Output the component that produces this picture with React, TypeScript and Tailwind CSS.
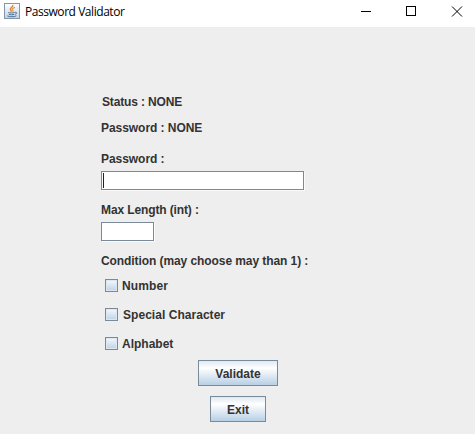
import React from 'react';

function JavaIcon() {
  return (
    <svg width="16" height="16" viewBox="0 0 16 16" fill="none" aria-hidden="true">
      <defs>
        <linearGradient id="tile" x1="0" y1="0" x2="0" y2="1">
          <stop offset="0" stopColor="#ffffff" />
          <stop offset="1" stopColor="#c3d3e1" />
        </linearGradient>
      </defs>
      <rect x="0.5" y="0.5" width="15" height="15" fill="url(#tile)" stroke="#8296ab" />
      <path d="M8.8 2C9.4 4 5.2 5 6.6 7.2L7.6 8.6" stroke="#dc8a3c" strokeWidth="1.5" />
      <path d="M11 4.3C8.6 5 7.8 6 8.8 7.1C9.3 7.8 9 8.3 8.5 8.8" stroke="#e0994f" strokeWidth="1.3" />
      <path d="M4.2 9.5C6 10.2 9 10.1 10.6 9.5M4.8 11.3C6.5 12 8.8 11.9 10.2 11.3M3.3 12.9C5.5 14.1 10.2 14 12.4 12.8M10.9 9.3C13.4 8.8 13.2 11 10.9 11.4" stroke="#4b7192" strokeWidth="1" />
    </svg>
  );
}

const label = 'block h-4 leading-4 whitespace-nowrap';

function Field({ className, caret }: { className: string; caret?: boolean }) {
  return (
    <div className={`flex h-[19px] border border-[#7a8a99] bg-white shadow-[1px_1px_0_#fafafa] ${className}`}>
      {caret && <span className="mt-px ml-px h-[15px] w-px bg-[#222]" />}
    </div>
  );
}

function Check({ text, className }: { text: string; className: string }) {
  return (
    <label className="flex h-[13px] items-center">
      <span className="h-[13px] w-[13px] border border-[#7a8a99] bg-linear-to-b from-[#f5f9fc] to-[#bdd2e5] shadow-[inset_0_0_0_1px_#dce7f1]" />
      <span className={`${label} ${className}`}>{text}</span>
    </label>
  );
}

function Button({ text, className }: { text: string; className: string }) {
  return (
    <button
      className={`h-[26px] border border-[#7a8a99] bg-linear-to-b from-[#dfe9f3] via-white via-30% to-[#b8cfe5] pt-px leading-4 ${className}`}
    >
      {text}
    </button>
  );
}

export default function App() {
  return (
    <div className="flex h-[434px] w-[475px] flex-col overflow-hidden bg-[#eeeeee] font-['Liberation_Sans',Arial,sans-serif] text-[12px] font-bold text-[#333333]">
      <header className="flex h-[27px] shrink-0 items-start bg-white pt-[3px] pl-1 font-['Open_Sans','Noto_Sans',sans-serif] font-normal text-black">
        <JavaIcon />
        <span className="ml-[5px] h-4 grow text-[12px] leading-[18px] tracking-[-0.45px] whitespace-nowrap">Password Validator</span>
        <svg className="shrink-0" width="114" height="16" viewBox="361 3 114 16" fill="none" stroke="#000" aria-hidden="true">
          <path d="M361 11.5H371" />
          <rect x="406.5" y="6.5" width="9" height="9" />
          <path d="M452 6.5L462 16.5M462 6.5L452 16.5" />
        </svg>
      </header>
      <main className="flex flex-col items-start pt-[67px] pl-[101px]">
        <span className={`${label} pl-px tracking-[-0.15px]`}>Status : NONE</span>
        <span className={`${label} mt-[10px] tracking-[-0.05px]`}>Password : NONE</span>
        <span className={`${label} mt-[15px] tracking-[-0.05px]`}>Password :</span>
        <Field className="mt-1 w-[203px]" caret />
        <span className={`${label} mt-3 tracking-[-0.12px]`}>Max Length (int) :</span>
        <Field className="mt-1 w-[53px]" />
        <span className={`${label} mt-3 tracking-[-0.08px]`}>Condition (may choose may than 1) :</span>
        <div className="mt-[10px] flex flex-col gap-4 pl-1">
          <Check text="Number" className="ml-1 tracking-[0.1px]" />
          <Check text="Special Character" className="ml-[5px] tracking-[0.04px]" />
          <Check text="Alphabet" className="ml-1" />
        </div>
        <div className="mt-[10px] ml-[97px] flex w-20 flex-col items-center gap-[10px]">
          <Button text="Validate" className="w-20" />
          <Button text="Exit" className="w-14" />
        </div>
      </main>
    </div>
  );
}
